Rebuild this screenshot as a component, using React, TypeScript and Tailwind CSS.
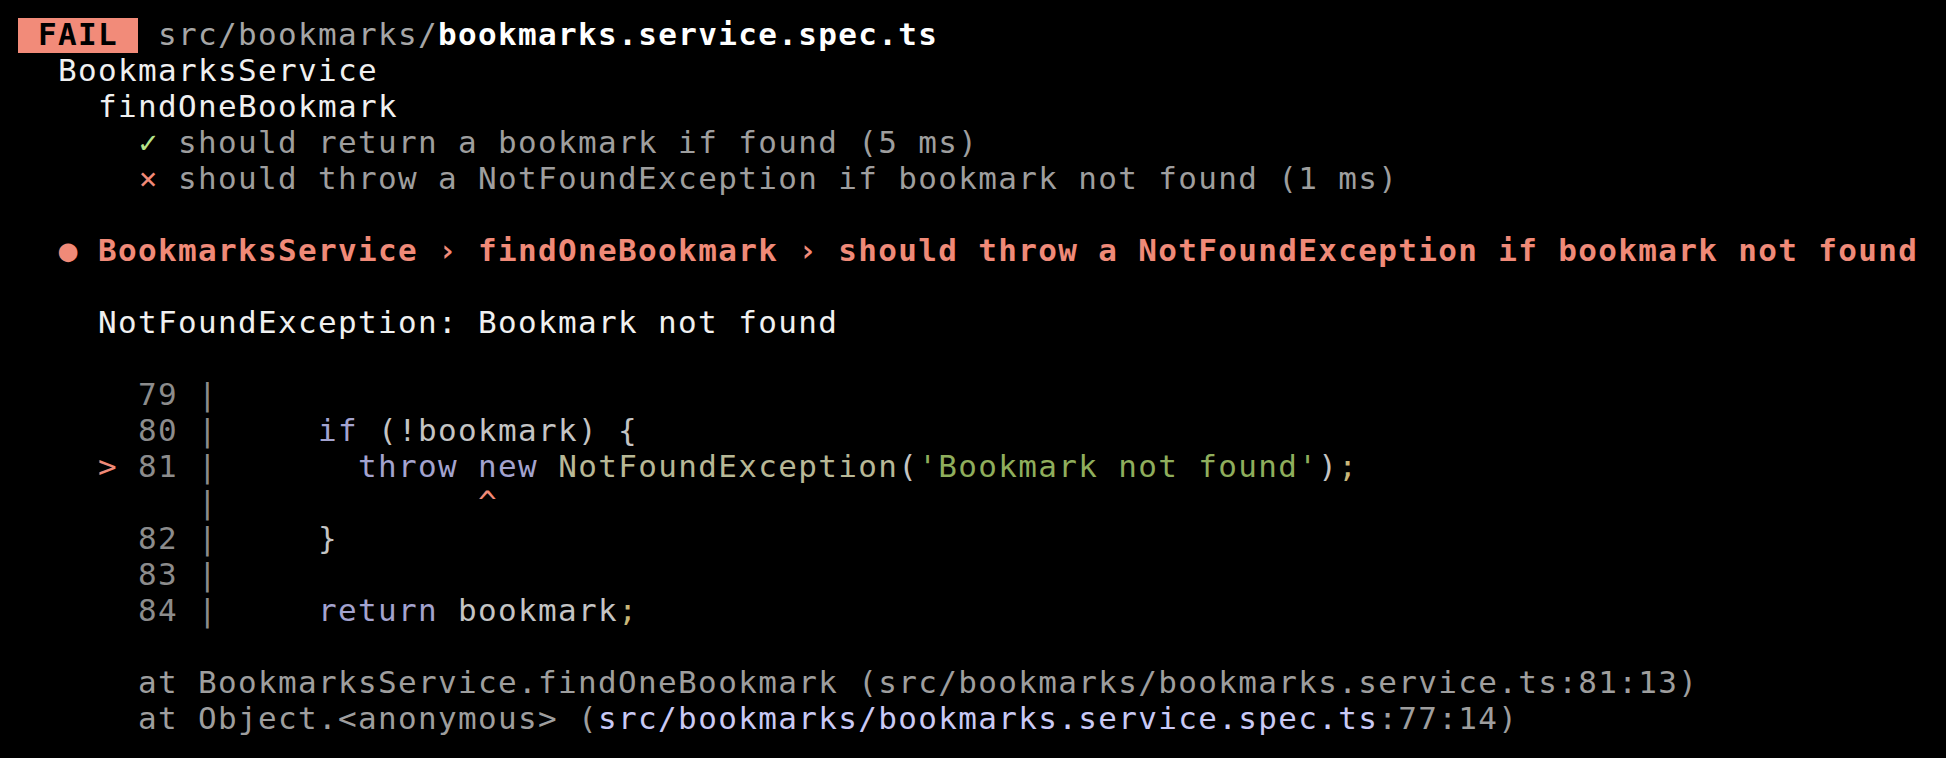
import React from "react";

const Cell = ({ ch, className }: { ch: string; className: string }) => (
  <span className={`inline-block w-[20px] text-center tracking-normal ${className}`}>{ch}</span>
);

const Line = ({ children }: { children?: React.ReactNode }) => (
  <div className="h-[36px] whitespace-pre">{children}</div>
);

export default function App() {
  return (
    <div
      className="min-h-screen w-full bg-black pl-[18px] pt-[16px] text-[31px] leading-[36px] tracking-[1.34px] text-[#f0f0f0]"
      style={{ fontFamily: '"DejaVu Sans Mono", "Liberation Mono", monospace' }}
    >
      <div className="flex h-[36px] items-start whitespace-pre">
        <span className="mt-[2px] h-[35px] bg-[#f28b79] font-bold leading-[32px] text-black"> FAIL </span>
        <span className="text-[#a6a6a6]"> src/bookmarks/</span>
        <span className="font-bold text-white">bookmarks.service.spec.ts</span>
      </div>
      <Line>{"  BookmarksService"}</Line>
      <Line>{"    findOneBookmark"}</Line>
      <Line>
        {"      "}
        <Cell ch="✓" className="text-[#b6e38a]" />
        <span className="text-[#9e9e9e]">{" should return a bookmark if found (5 ms)"}</span>
      </Line>
      <Line>
        {"      "}
        <Cell ch="×" className="text-[#f08a78]" />
        <span className="text-[#9e9e9e]">{" should throw a NotFoundException if bookmark not found (1 ms)"}</span>
      </Line>
      <Line />
      <Line>
        {"  "}
        <Cell ch="●" className="text-[#f08a78]" />
        <span className="font-bold text-[#f08a78]">
          {" BookmarksService › findOneBookmark › should throw a NotFoundException if bookmark not found"}
        </span>
      </Line>
      <Line />
      <Line>{"    NotFoundException: Bookmark not found"}</Line>
      <Line />
      <Line>
        <span className="text-[#8c8c8c]">{"      79 |"}</span>
      </Line>
      <Line>
        <span className="text-[#8c8c8c]">{"      80 | "}</span>
        {"    "}
        <span className="text-[#a3a3cf]">if</span>
        <span className="text-[#c4c4c4]">{" (!bookmark) {"}</span>
      </Line>
      <Line>
        {"    "}
        <span className="text-[#f08a78]">{">"}</span>
        <span className="text-[#8c8c8c]">{" 81 | "}</span>
        {"      "}
        <span className="text-[#a3a3cf]">throw new</span>
        {" "}
        <span className="text-[#b8b896]">NotFoundException</span>
        <span className="text-[#c4c4c4]">(</span>
        <span className="text-[#8fae5c]">'Bookmark not found'</span>
        <span className="text-[#c4c4c4]">)</span>
        <span className="text-[#c9b778]">;</span>
      </Line>
      <Line>
        <span className="text-[#8c8c8c]">{"         | "}</span>
        {"            "}
        <span className="text-[#f08a78]">^</span>
      </Line>
      <Line>
        <span className="text-[#8c8c8c]">{"      82 | "}</span>
        {"    "}
        <span className="text-[#c4c4c4]">{"}"}</span>
      </Line>
      <Line>
        <span className="text-[#8c8c8c]">{"      83 |"}</span>
      </Line>
      <Line>
        <span className="text-[#8c8c8c]">{"      84 | "}</span>
        {"    "}
        <span className="text-[#a3a3cf]">return</span>
        <span className="text-[#c4c4c4]">{" bookmark"}</span>
        <span className="text-[#c9b778]">;</span>
      </Line>
      <Line />
      <Line>
        <span className="text-[#9e9e9e]">
          {"      at BookmarksService.findOneBookmark (src/bookmarks/bookmarks.service.ts:81:13)"}
        </span>
      </Line>
      <Line>
        <span className="text-[#9e9e9e]">{"      at Object.<anonymous> ("}</span>
        <span className="text-[#c9c9f5]">src/bookmarks/bookmarks.service.spec.ts</span>
        <span className="text-[#9e9e9e]">:77:14)</span>
      </Line>
    </div>
  );
}
